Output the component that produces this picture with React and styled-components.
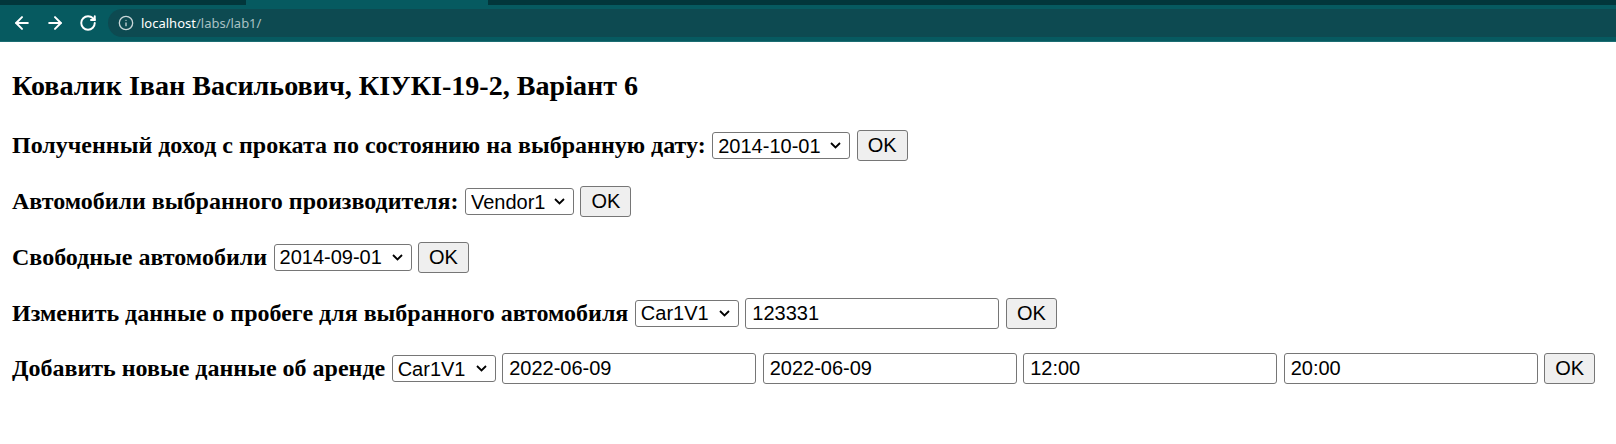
import React from 'react';
import styled, { createGlobalStyle } from 'styled-components';
import { ArrowLeft, ArrowRight, RotateCw, Info } from 'lucide-react';

const GlobalStyle = createGlobalStyle`
    html, body {
        margin: 0;
        padding: 0;
        background: #fff;
    }
`;

const rows = [
    {
        label: 'Полученный доход с проката по состоянию на выбранную дату:',
        select: { value: '2014-10-01', width: 138 },
        inputs: [],
    },
    {
        label: 'Автомобили выбранного производителя:',
        select: { value: 'Vendor1', width: 109 },
        inputs: [],
    },
    {
        label: 'Свободные автомобили',
        select: { value: '2014-09-01', width: 138 },
        inputs: [],
    },
    {
        label: 'Изменить данные о пробеге для выбранного автомобиля',
        select: { value: 'Car1V1', width: 104 },
        inputs: ['123331'],
    },
    {
        label: 'Добавить новые данные об аренде',
        select: { value: 'Car1V1', width: 104 },
        inputs: ['2022-06-09', '2022-06-09', '12:00', '20:00'],
    },
];

const App = () => (
    <>
        <GlobalStyle />
        <Chrome>
            <TabStrip>
                <TabGap />
            </TabStrip>
            <Toolbar>
                <NavButton><ArrowLeft size={20} strokeWidth={2.4} /></NavButton>
                <NavButton><ArrowRight size={20} strokeWidth={2.4} /></NavButton>
                <NavButton><RotateCw size={18} strokeWidth={2.6} /></NavButton>
                <AddressBar>
                    <Info size={16} strokeWidth={2} color="#c9d6d8" />
                    <Url><Host>localhost</Host>/labs/lab1/</Url>
                </AddressBar>
            </Toolbar>
        </Chrome>

        <Page>
            <Heading>Ковалик Іван Васильович, КІУКІ-19-2, Варіант 6</Heading>
            {rows.map((row, i) => (
                <Row key={i}>
                    <Label>{row.label}</Label>
                    <SelectWrap $width={row.select.width}>
                        <Select defaultValue={row.select.value}>
                            <option>{row.select.value}</option>
                        </Select>
                        <Chevron width="11" height="7" viewBox="0 0 11 7">
                            <path d="M1 1 L5.5 5.5 L10 1" fill="none" stroke="#000" strokeWidth="1.8" />
                        </Chevron>
                    </SelectWrap>
                    {row.inputs.map((v, j) => (
                        <Field key={j} type="text" defaultValue={v} />
                    ))}
                    <Button type="button">OK</Button>
                </Row>
            ))}
        </Page>
    </>
);

export default App;

const Chrome = styled.header`
    display: flex;
    flex-direction: column;
    height: 42px;
    background: #065a60;
    border-bottom: 1px solid #1b6d72;
    box-sizing: border-box;
`;

const TabStrip = styled.div`
    height: 5px;
    background: #02363b;
    display: flex;
`;

const TabGap = styled.div`
    margin-left: 246px;
    width: 242px;
    background: #065a60;
`;

const Toolbar = styled.div`
    flex: 1;
    display: flex;
    align-items: center;
    padding-left: 5px;
`;

const NavButton = styled.div`
    width: 33px;
    height: 28px;
    display: flex;
    align-items: center;
    justify-content: center;
    color: #ffffff;
`;

const AddressBar = styled.div`
    flex: 1;
    height: 28px;
    margin-left: 4px;
    display: flex;
    align-items: center;
    gap: 7px;
    padding-left: 10px;
    background: #0d4a51;
    border-radius: 14px 0 0 14px;
`;

const Url = styled.span`
    font-family: "Noto Sans", "Liberation Sans", sans-serif;
    font-size: 13px;
    color: #a9c1c4;
`;

const Host = styled.span`
    color: #ffffff;
`;

const Page = styled.main`
    display: flex;
    flex-direction: column;
    padding: 28px 12px 0;
    font-family: "Liberation Serif", "Times New Roman", serif;
    color: #000;
`;

const Heading = styled.h1`
    margin: 0 0 28px;
    font-size: 28.08px;
    line-height: 32.3px;
    font-weight: bold;
`;

const Row = styled.div`
    display: flex;
    align-items: center;
    gap: 6.5px;
    height: 31px;
    margin-bottom: 24.8px;
`;

const Label = styled.span`
    font-size: 24px;
    font-weight: bold;
    white-space: nowrap;
`;

const SelectWrap = styled.div`
    position: relative;
    width: ${(p) => p.$width}px;
    height: 27px;
    flex-shrink: 0;
`;

const Select = styled.select`
    appearance: none;
    width: 100%;
    height: 100%;
    box-sizing: border-box;
    font-family: "Liberation Sans", Arial, sans-serif;
    font-size: 20px;
    color: #000;
    background: #fff;
    border: 1px solid #767676;
    border-radius: 3px;
    padding: 0 0 0 5px;
`;

const Chevron = styled.svg`
    position: absolute;
    right: 9px;
    top: 10px;
    pointer-events: none;
`;

const Field = styled.input`
    width: 254px;
    height: 31px;
    box-sizing: border-box;
    font-family: "Liberation Sans", Arial, sans-serif;
    font-size: 20px;
    color: #000;
    border: 1px solid #767676;
    border-radius: 3px;
    padding: 0 6px;
`;

const Button = styled.button`
    width: 51px;
    height: 31px;
    box-sizing: border-box;
    font-family: "Liberation Sans", Arial, sans-serif;
    font-size: 20px;
    color: #000;
    background: #efefef;
    border: 1px solid #767676;
    border-radius: 3px;
    padding: 0;
`;
